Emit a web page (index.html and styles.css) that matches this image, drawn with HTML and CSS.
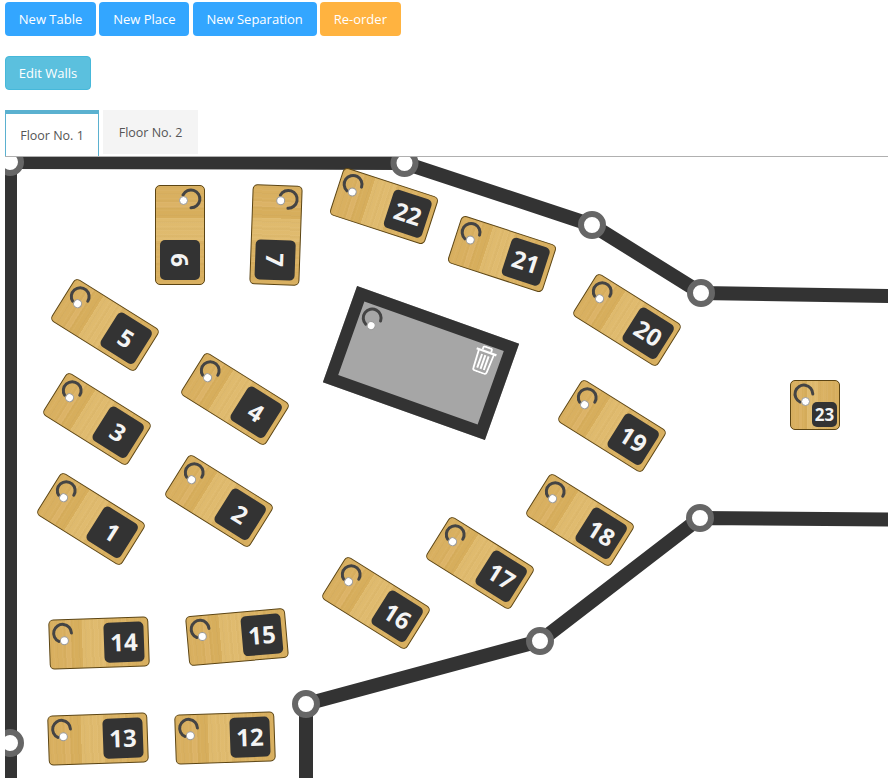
FILE: index.html
```html
<!DOCTYPE html>
<html lang="en">
<head>
    <meta charset="UTF-8">
    <title>Floor Plan</title>
    <link rel="stylesheet" href="styles.css">
</head>
<body>
    <div class="toolbar">
        <button class="btn btn-blue">New Table</button>
        <button class="btn btn-blue">New Place</button>
        <button class="btn btn-blue">New Separation</button>
        <button class="btn btn-orange">Re-order</button>
    </div>
    <div class="toolbar toolbar-second">
        <button class="btn btn-cyan">Edit Walls</button>
    </div>

    <div class="tabs">
        <div class="tab active">Floor No. 1</div>
        <div class="tab">Floor No. 2</div>
    </div>

    <svg class="defs" width="0" height="0">
        <symbol id="arc" viewBox="0 0 24 24">
            <path d="M8 20A8.900 8.900 0 1 1 20.800 12" fill="none" stroke="#444" stroke-width="3" stroke-linecap="round"/>
        </symbol>
    </svg>

    <div class="floor">
        <svg class="walls" width="883" height="621">
            <polyline points="5,5 399.500,6 587,68 696,136 890,139"/>
            <polyline points="5,5 5,586 5,630"/>
            <polyline points="890,362.500 695,361 535,484 301,547 301,630"/>
            <circle cx="5" cy="5" r="11"/>
            <circle cx="399.500" cy="6" r="11"/>
            <circle cx="587" cy="68" r="11"/>
            <circle cx="696" cy="136" r="11"/>
            <circle cx="695" cy="361" r="11"/>
            <circle cx="535" cy="484" r="11"/>
            <circle cx="301" cy="547" r="11"/>
            <circle cx="5" cy="586" r="11"/>
        </svg>

        <div class="separation" style="left:330px;top:155px;transform:rotate(19.6deg)">
            <svg class="handle"><use href="#arc"/></svg><span class="dot"></span>
            <svg class="trash" viewBox="0 0 22 28">
                <g fill="none" stroke="#fff" stroke-width="1.800">
                    <path d="M6.500 4.500V2.500Q6.500 1 8 1h6Q15.500 1 15.500 2.500V4.500"/>
                    <path d="M0.500 5.500h21" stroke-width="2.200"/>
                    <path d="M3 5.500l1 19.500q0 2 2 2h10q2 0 2-2l1-19.500"/>
                    <path d="M7.500 9v14.500M11 9v14.500M14.500 9v14.500" stroke-width="2"/>
                </g>
            </svg>
        </div>

        <div class="table" style="left:125px;top:53px;transform:rotate(90deg)"><svg class="handle"><use href="#arc"/></svg><span class="dot"></span><span class="label">6</span></div>
        <div class="table" style="left:221px;top:53px;transform:rotate(92deg)"><svg class="handle"><use href="#arc"/></svg><span class="dot"></span><span class="label">7</span></div>
        <div class="table" style="left:329px;top:24px;transform:rotate(18deg)"><svg class="handle"><use href="#arc"/></svg><span class="dot"></span><span class="label">22</span></div>
        <div class="table" style="left:447px;top:72px;transform:rotate(18deg)"><svg class="handle"><use href="#arc"/></svg><span class="dot"></span><span class="label">21</span></div>
        <div class="table" style="left:572px;top:138px;transform:rotate(32deg)"><svg class="handle"><use href="#arc"/></svg><span class="dot"></span><span class="label">20</span></div>
        <div class="table" style="left:50px;top:143px;transform:rotate(32deg)"><svg class="handle"><use href="#arc"/></svg><span class="dot"></span><span class="label">5</span></div>
        <div class="table" style="left:42px;top:237px;transform:rotate(32deg)"><svg class="handle"><use href="#arc"/></svg><span class="dot"></span><span class="label">3</span></div>
        <div class="table" style="left:180px;top:217px;transform:rotate(32deg)"><svg class="handle"><use href="#arc"/></svg><span class="dot"></span><span class="label">4</span></div>
        <div class="table" style="left:36px;top:337px;transform:rotate(32deg)"><svg class="handle"><use href="#arc"/></svg><span class="dot"></span><span class="label">1</span></div>
        <div class="table" style="left:164px;top:319px;transform:rotate(32deg)"><svg class="handle"><use href="#arc"/></svg><span class="dot"></span><span class="label">2</span></div>
        <div class="table" style="left:557px;top:244px;transform:rotate(32deg)"><svg class="handle"><use href="#arc"/></svg><span class="dot"></span><span class="label">19</span></div>
        <div class="table" style="left:525px;top:338px;transform:rotate(32deg)"><svg class="handle"><use href="#arc"/></svg><span class="dot"></span><span class="label">18</span></div>
        <div class="table" style="left:425px;top:381px;transform:rotate(32deg)"><svg class="handle"><use href="#arc"/></svg><span class="dot"></span><span class="label">17</span></div>
        <div class="table" style="left:321px;top:421px;transform:rotate(32deg)"><svg class="handle"><use href="#arc"/></svg><span class="dot"></span><span class="label">16</span></div>
        <div class="table" style="left:44px;top:461px;transform:rotate(-2deg)"><svg class="handle"><use href="#arc"/></svg><span class="dot"></span><span class="label">14</span></div>
        <div class="table" style="left:182px;top:455px;transform:rotate(-5deg)"><svg class="handle"><use href="#arc"/></svg><span class="dot"></span><span class="label">15</span></div>
        <div class="table" style="left:43px;top:557px;transform:rotate(-2deg)"><svg class="handle"><use href="#arc"/></svg><span class="dot"></span><span class="label">13</span></div>
        <div class="table" style="left:170px;top:556px;transform:rotate(-2deg)"><svg class="handle"><use href="#arc"/></svg><span class="dot"></span><span class="label">12</span></div>
        <div class="table place" style="left:785px;top:223px"><svg class="handle"><use href="#arc"/></svg><span class="dot"></span><span class="label">23</span></div>
    </div>
</body>
</html>
```

FILE: styles.css
```css
html, body {
    height: 100%;
}
body {
    margin: 0;
    padding: 2px 0 0 5px;
    box-sizing: border-box;
    background: #fff;
    font-family: "Open Sans", Arial, sans-serif;
    overflow: hidden;
}
.toolbar {
    display: flex;
    gap: 3.3px;
}
.toolbar-second {
    margin-top: 20px;
}
.btn {
    height: 34px;
    padding: 0 12.8px;
    border: 1px solid transparent;
    border-radius: 4px;
    color: #fff;
    font-family: inherit;
    font-size: 13px;
    cursor: pointer;
}
.btn-blue {
    background-color: #33a6ff;
}
.btn-orange {
    background-color: #ffb340;
}
.btn-cyan {
    background-color: #5bc0de;
    border-color: #46b8da;
}
.tabs {
    display: flex;
    gap: 4px;
    margin-top: 20px;
    height: 47px;
    align-items: flex-start;
}
.tab {
    width: 95px;
    height: 44px;
    line-height: 45px;
    text-align: center;
    font-size: 12.5px;
    color: #555;
    background: #f4f4f4;
}
.tab.active {
    width: 94px;
    height: 47px;
    line-height: 44px;
    box-sizing: border-box;
    background: #fff;
    border: 1px solid #5bb1d0;
    border-top: 4px solid #5bb1d0;
    border-bottom: none;
}
.defs {
    position: absolute;
}
.floor {
    position: relative;
    height: 621px;
    overflow: hidden;
    border-top: 1px solid #b0b0b0;
    margin-top: -1px;
}
.walls {
    position: absolute;
    left: 0;
    top: 0;
}
.walls polyline {
    fill: none;
    stroke: #333;
    stroke-width: 14;
}
.walls circle {
    fill: #fff;
    stroke: #666;
    stroke-width: 6;
}
/* wood: fine grain over broad bands */
.table {
    position: absolute;
    box-sizing: border-box;
    width: 100px;
    height: 50px;
    border: 1px solid #5c4514;
    border-radius: 5px;
    background-color: #dab263;
    background-image:
        repeating-linear-gradient(90deg, rgba(255, 255, 255, 0.03) 0 1px, transparent 1px 4px),
        repeating-linear-gradient(90deg, rgba(120, 85, 20, 0.03) 0 2px, transparent 2px 7px),
        linear-gradient(90deg,
            #d9b060 0, #d9b060 16%, #dcb366 16%, #dcb366 22%, #d7ae5c 22%, #d7ae5c 33%,
            #dfba6d 33%, #e0bb6f 56%, #d9b162 56%, #dbb365 78%, #d8af5f 78%, #d8af5f 100%);
}
.place {
    width: 50px;
    height: 50px;
}
.handle {
    position: absolute;
    left: 1px;
    top: 0.5px;
    width: 24px;
    height: 24px;
}
.dot {
    position: absolute;
    left: 10px;
    top: 16px;
    box-sizing: border-box;
    width: 9px;
    height: 9px;
    border: 1px solid #999;
    border-radius: 50%;
    background: #fff;
}
.label {
    position: absolute;
    right: 4px;
    top: 4px;
    width: 40px;
    height: 40px;
    line-height: 40px;
    border-radius: 5px;
    background: #333;
    color: #f4f4f4;
    font-size: 24px;
    font-weight: 700;
    text-align: center;
}
.place .label {
    right: 2px;
    top: auto;
    bottom: 2px;
    width: 25px;
    height: 25px;
    line-height: 25px;
    font-size: 17px;
}
.separation {
    position: absolute;
    box-sizing: border-box;
    width: 172px;
    height: 102px;
    border: 12.5px solid #333;
    background: #a6a6a6;
}
.trash {
    position: absolute;
    left: 121px;
    top: 1px;
    width: 22px;
    height: 28px;
}
```
